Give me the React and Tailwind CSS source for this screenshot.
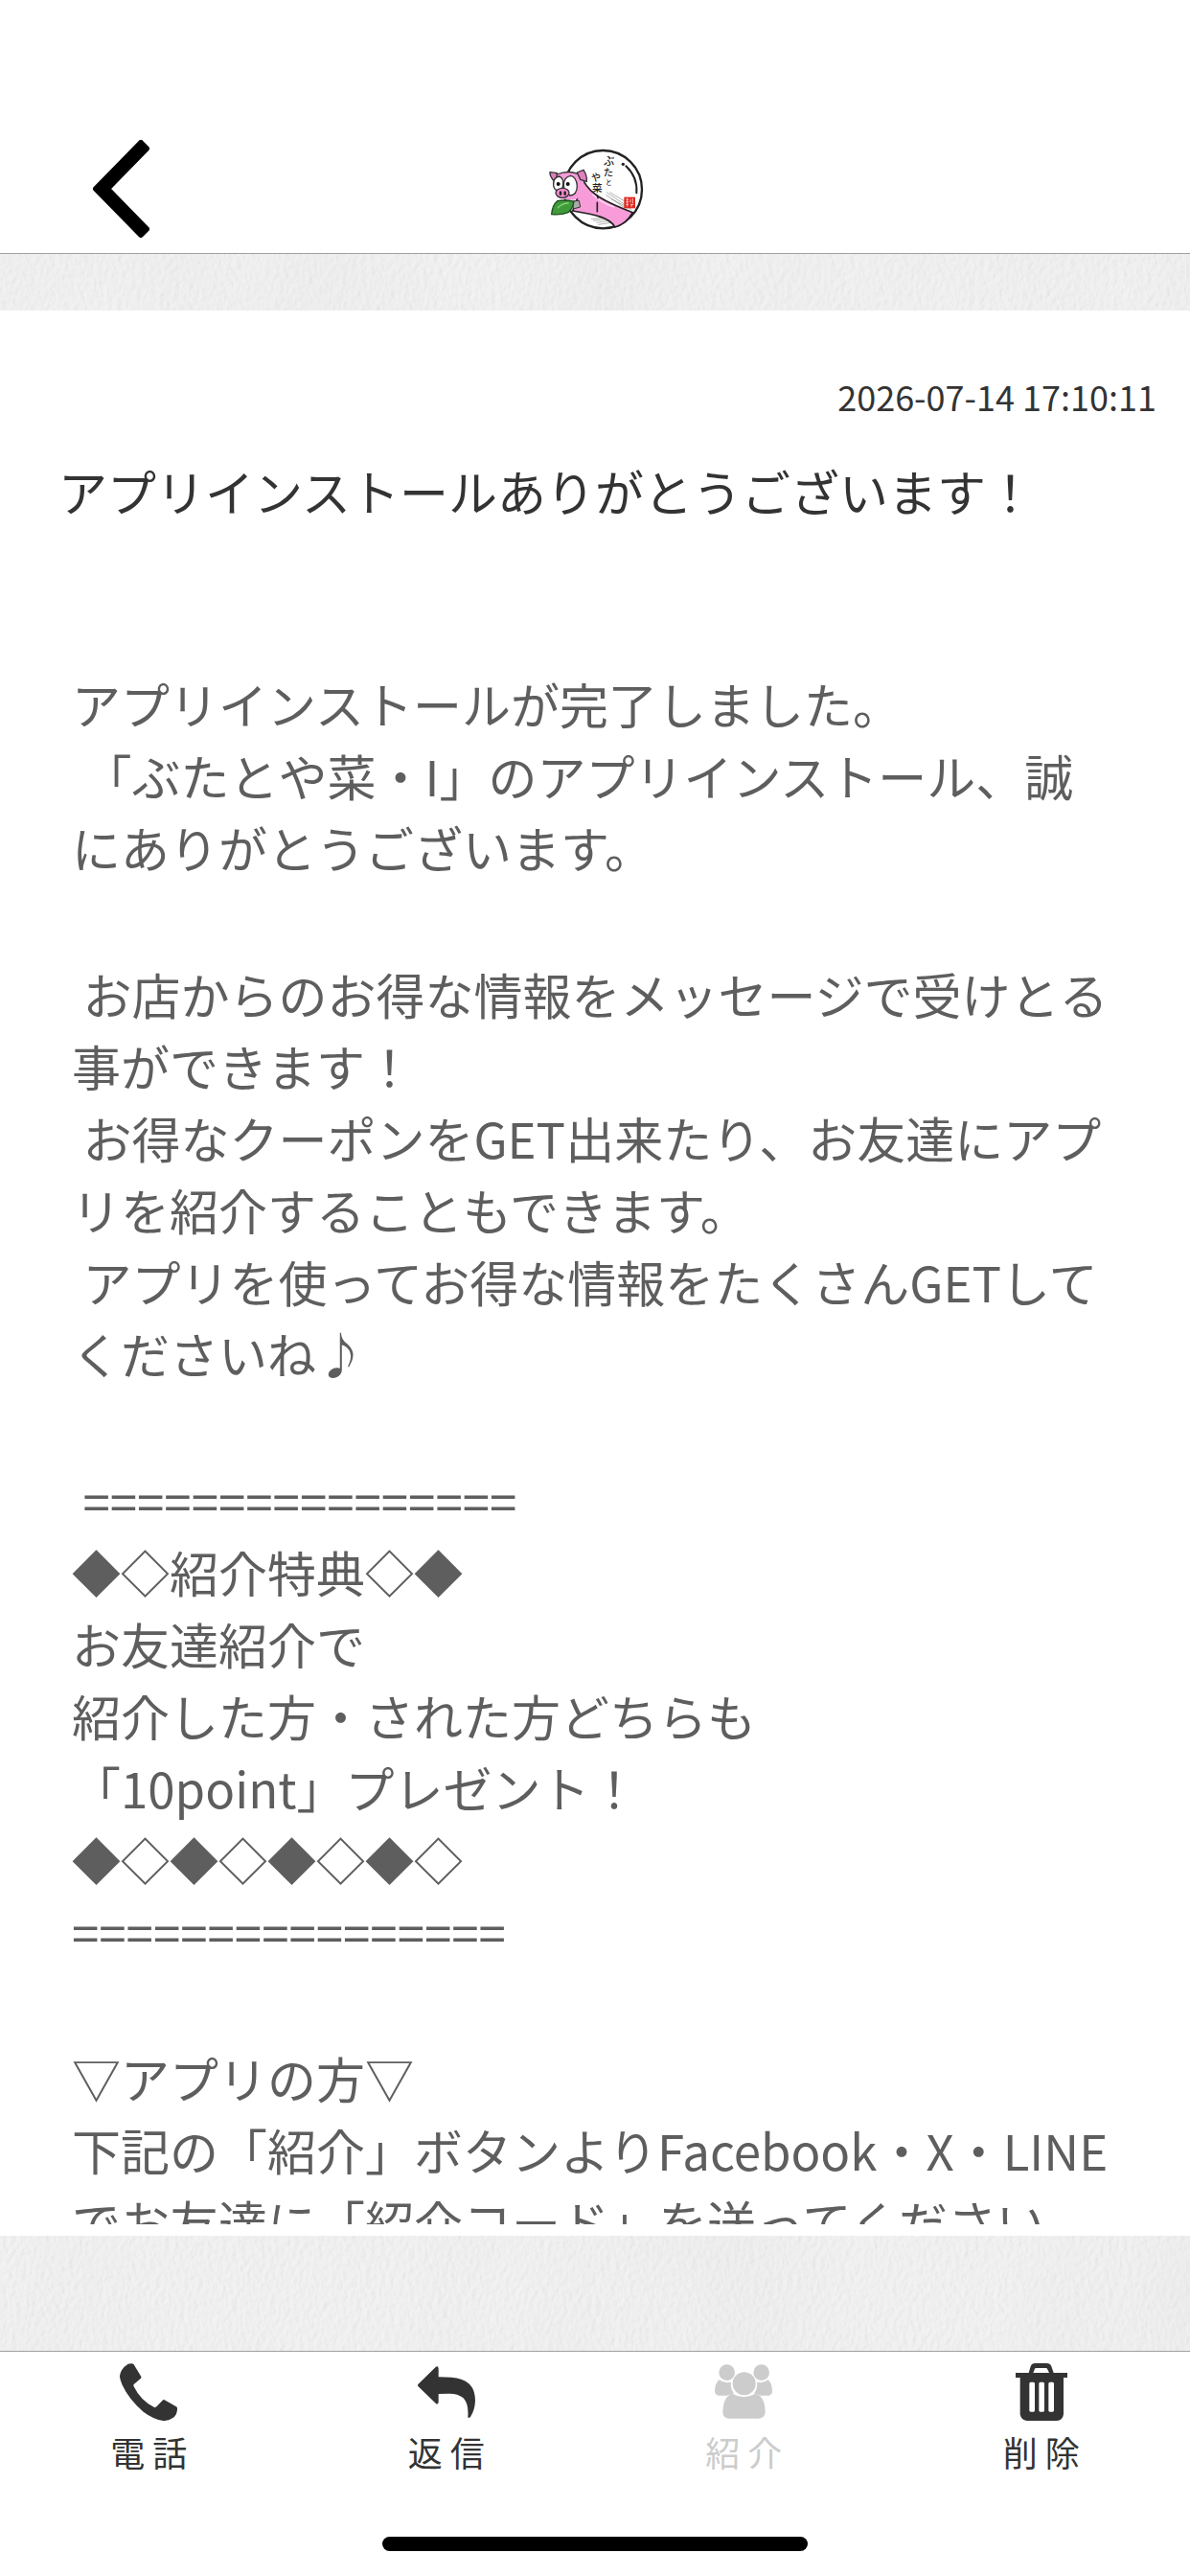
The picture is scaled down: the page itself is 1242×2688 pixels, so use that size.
import React from 'react';

const MESSAGE_BLOCKS = [
  'アプリインストールが完了しました。\n 「ぶたとや菜・I」のアプリインストール、誠にありがとうございます。',
  ' お店からのお得な情報をメッセージで受けとる事ができます！\n お得なクーポンをGET出来たり、お友達にアプリを紹介することもできます。\n アプリを使ってお得な情報をたくさんGETしてくださいね♪',
  ' ================\n◆◇紹介特典◇◆\nお友達紹介で\n紹介した方・された方どちらも\n「10point」プレゼント！\n◆◇◆◇◆◇◆◇\n================',
  '▽アプリの方▽\n下記の「紹介」ボタンよりFacebook・X・LINEでお友達に「紹介コード」を送ってください',
];

function BackIcon() {
  return (
    <svg viewBox="0 0 60 102" className="w-[60px] h-[102px]" aria-hidden="true">
      <path
        d="M4 51 L51 3 L57 9 L16 51 L57 93 L51 99 Z"
        fill="#000"
        stroke="#000"
        strokeWidth="6"
        strokeLinejoin="round"
      />
    </svg>
  );
}

//Logo de la tienda: cerdito con hoja dentro de un círculo
function ShopLogo() {
  return (
    <svg viewBox="0 0 480 390" className="w-[160px] h-[130px]" role="img" aria-label="ぶたとや菜">
      <circle cx="265" cy="203" r="122" fill="#fff" stroke="#222" strokeWidth="7" />
      <path d="M337 130 Q374 165 370 214" fill="none" stroke="#222" strokeWidth="6" strokeLinecap="round" />
      <circle cx="328" cy="124" r="5" fill="#222" />
      <g stroke="#888" strokeWidth="2" fill="none">
        <path d="M276 212 L345 258 M286 212 L350 250 M274 220 L335 262 M290 232 L355 266" />
        <path d="M228 296 L262 292 M234 301 L275 296 M244 307 L285 301 M250 313 L290 307" />
      </g>
      {/* Cuello */}
      <path
        d="M205 178 C225 215 265 240 358 275 C345 298 325 315 303 321 C285 290 240 282 170 270 L185 230 Z"
        fill="#f79cd9"
        stroke="#222"
        strokeWidth="5"
      />
      <path d="M232 218 Q262 246 300 258" fill="none" stroke="#fde0f4" strokeWidth="4" />
      <path d="M170 240 L190 238 L194 258 L172 264 Z" fill="#aaa" stroke="#333" strokeWidth="3" />
      {/* Cabeza */}
      <path
        d="M121 156 Q155 142 186 154 Q214 180 205 210 Q196 232 172 236 L130 232 Q108 190 121 156 Z"
        fill="#f79cd9"
      />
      <path d="M121 156 Q155 142 186 154" fill="none" stroke="#333" strokeWidth="4" />
      <path d="M99 149 L121 152 L118 178 L109 174 Q98 160 99 149 Z" fill="#e27fc0" stroke="#333" strokeWidth="4" />
      <path d="M184 150 L204 142 Q216 160 214 178 L194 172 Z" fill="#e27fc0" stroke="#333" strokeWidth="4" />
      <path d="M126 162 Q108 168 110 190 Q112 208 130 208 Q142 200 140 176 Q136 164 126 162 Z" fill="#fff" stroke="#333" strokeWidth="4" />
      <path d="M164 160 Q142 164 142 190 Q144 216 162 222 Q184 220 184 192 Q182 164 164 160 Z" fill="#fff" stroke="#333" strokeWidth="4" />
      <circle cx="125" cy="186" r="6" fill="#111" />
      <circle cx="155" cy="186" r="6" fill="#111" />
      <ellipse cx="138" cy="214" rx="21" ry="15" fill="#f28bcf" stroke="#333" strokeWidth="4" />
      <ellipse cx="132" cy="215" rx="4" ry="7" fill="#222" />
      <ellipse cx="146" cy="215" rx="4" ry="7" fill="#222" />
      {/* Hoja */}
      <path d="M122 239 Q150 234 174 241 Q170 264 156 275 Q134 284 104 281 Q106 252 122 239 Z" fill="#3f9a3a" stroke="#1f4d1f" strokeWidth="4" />
      <path d="M122 262 Q136 246 158 246" fill="none" stroke="#86d479" strokeWidth="4" />
      {/* Letras y sello */}
      <g fill="#222" className="font-medium" fontFamily="'Noto Sans CJK JP', sans-serif" textAnchor="middle">
        <text x="284" y="127" fontSize="34">ぶ</text>
        <text x="282" y="162" fontSize="31">た</text>
        <text x="283" y="188" fontSize="20">と</text>
        <text x="243" y="176" fontSize="30">や</text>
        <text x="247" y="211" fontSize="32">菜</text>
      </g>
      <path d="M247 222 L249 230 M247 244 V272" stroke="#222" strokeWidth="5" strokeLinecap="round" />
      <rect x="331" y="227" width="35" height="35" fill="#e0281f" />
      <path d="M337 234 H345 M337 242 H346 M341 231 V257 M337 250 H345 M351 233 V244 M358 231 V247 M351 250 H361 M354 250 V258" stroke="#fff" strokeWidth="2" fill="none" />
    </svg>
  );
}

function PhoneIcon() {
  return (
    <svg viewBox="0 0 180 180" className="size-[60px]" fill="currentColor" aria-hidden="true">
      <path d="M26 2 Q36 -1 43 2 L67 42 Q68 45 66 47 L44 66 Q42 69 44 73 Q66 118 108 138 Q112 139 115 136 L134 116 Q137 113 140 115 L177 136 Q180 138 180 141 Q181 158 170 169 Q154 181 136 180 Q106 176 74 152 Q28 112 8 68 Q0 50 0 40 Q2 18 26 2 Z" />
    </svg>
  );
}

function ReplyIcon() {
  return (
    <svg viewBox="0 0 180 180" className="size-[60px]" fill="currentColor" aria-hidden="true">
      <path d="M1 66 L56 12 Q64 6 65 17 V43 Q110 43 136 50 Q180 64 180 118 Q179 146 165 168 Q158 174 157 168 Q160 126 142 108 Q124 94 96 95 L65 96 V121 Q64 132 56 125 L1 72 Q-1 69 1 66 Z" />
    </svg>
  );
}

function FriendsIcon() {
  return (
    <svg viewBox="0 0 180 180" className="size-[60px]" fill="currentColor" aria-hidden="true">
      <circle cx="38" cy="29" r="25" />
      <circle cx="146" cy="29" r="25" />
      <path d="M14 52 Q30 64 51 59 Q48 80 60 94 Q44 100 38 101 H12 Q0 99 0 87 Q0 63 14 52 Z" />
      <path d="M167 52 Q151 64 132 59 Q135 80 123 94 Q138 100 144 101 H169 Q180 99 180 87 Q180 63 167 52 Z" />
      <circle cx="92" cy="64" r="36" />
      <path d="M55 95 Q90 116 128 95 Q158 104 158 154 Q156 173 136 173 H46 Q26 173 25 154 Q26 104 55 95 Z" />
    </svg>
  );
}

function TrashIcon() {
  return (
    <svg viewBox="0 0 180 180" className="size-[60px]" fill="currentColor" aria-hidden="true">
      <path
        fillRule="evenodd"
        d="M50 30 L56 10 Q60 0 70 0 H106 Q117 0 121 10 L128 30 H171 V45 H159 V160 Q156 180 138 180 H44 Q26 178 23 160 V45 H9 V30 Z M64 30 H114 L108 17 Q107 15 104 15 H73 Q70 15 69 17 Z M56 59 Q52 59 52 64 V148 Q52 152 56 152 H65 Q69 152 69 148 V64 Q69 59 65 59 Z M86 59 Q82 59 82 64 V148 Q82 152 86 152 H95 Q99 152 99 148 V64 Q99 59 95 59 Z M116 59 Q112 59 112 64 V148 Q112 152 116 152 H125 Q129 152 129 148 V64 Q129 59 125 59 Z"
      />
    </svg>
  );
}

//Fondo con textura de pared enyesada: grano fino y manchas suaves
function PlasterTexture() {
  return (
    <svg className="absolute inset-0 w-full h-full" aria-hidden="true">
      <filter id="grain" x="0" y="0" width="100%" height="100%" colorInterpolationFilters="sRGB">
        <feTurbulence type="fractalNoise" baseFrequency="0.2 0.14" numOctaves="3" seed="8" />
        <feDiffuseLighting surfaceScale="0.4" lightingColor="#f3f3f4">
          <feDistantLight azimuth="200" elevation="80" />
        </feDiffuseLighting>
      </filter>
      <filter id="stains" x="0" y="0" width="100%" height="100%" colorInterpolationFilters="sRGB">
        <feTurbulence type="fractalNoise" baseFrequency="0.007 0.004" numOctaves="2" seed="3" />
        <feColorMatrix values="0 0 0 0 0.8  0 0 0 0 0.8  0 0 0 0 0.8  0.5 0 0 0 -0.18" />
      </filter>
      <rect width="100%" height="100%" filter="url(#grain)" />
      <rect width="100%" height="100%" filter="url(#stains)" opacity="0.4" />
    </svg>
  );
}

function ActionButton({ label, disabled, children }) {
  return (
    <button
      type="button"
      disabled={disabled}
      className={`flex flex-col items-center gap-1.5 pt-3 ${disabled ? 'text-[#cccccc]' : 'text-[#333333]'}`}
    >
      {children}
      <span className="text-[36px] leading-[52px]">{label}</span>
    </button>
  );
}

export default function App() {
  return (
    <div className="h-screen flex flex-col bg-white font-['Noto_Sans_CJK_JP',sans-serif]" lang="ja">
      {/* CABECERA */}
      <header className="grid grid-cols-3 items-center pt-[130px] border-b border-[#a0a0a0]">
        <button type="button" aria-label="戻る" className="justify-self-start ml-[96px]">
          <BackIcon />
        </button>
        <div className="justify-self-center h-[134px]">
          <ShopLogo />
        </div>
      </header>

      {/* MENSAJE */}
      <main className="relative flex-1 min-h-0 flex flex-col pt-[59px] pb-[120px] bg-[#efeff0]">
        <PlasterTexture />
        <article className="relative flex-1 min-h-0 flex flex-col bg-white pt-[63px] pb-3">
          <time className="self-end mr-[35px] text-[36px] leading-[52px] text-[#333333]">2026-07-14 17:10:11</time>
          <h1 className="mt-9 mx-[61px] text-[51px] leading-[75px] text-[#333333]">
            アプリインストールありがとうございます！
          </h1>
          <div className="mt-[147px] px-[75px] flex-1 min-h-0 overflow-hidden flex flex-col gap-[78px] text-[51px] leading-[75px] text-[#5e5e5e]">
            {MESSAGE_BLOCKS.map((block, index) => (
              <p key={index} className="whitespace-pre-wrap">{block}</p>
            ))}
          </div>
        </article>
      </main>

      {/* BARRA DE ACCIONES */}
      <footer className="border-t border-[#a0a0a0]">
        <div className="grid grid-cols-4">
          <ActionButton label="電 話">
            <PhoneIcon />
          </ActionButton>
          <ActionButton label="返 信">
            <ReplyIcon />
          </ActionButton>
          <ActionButton label="紹 介" disabled>
            <FriendsIcon />
          </ActionButton>
          <ActionButton label="削 除">
            <TrashIcon />
          </ActionButton>
        </div>
        <div className="mt-[63px] mb-[26px] mx-auto w-[444px] h-[15px] rounded-full bg-black" />
      </footer>
    </div>
  );
}
